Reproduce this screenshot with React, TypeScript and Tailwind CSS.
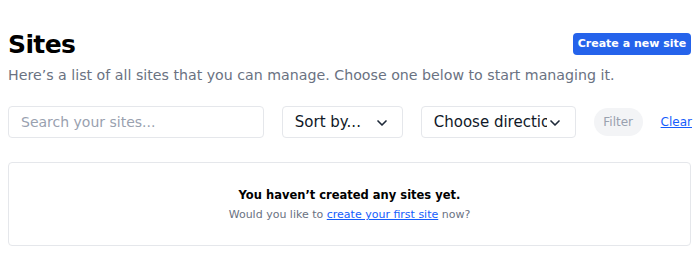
import React from 'react';
import { ChevronDown } from 'lucide-react';

const font = { fontFamily: '"DejaVu Sans", "Noto Sans", sans-serif' };

function SelectBox({ label, width }: { label: string; width: string }) {
  return (
    <div
      className={`${width} relative h-8 flex items-center rounded border border-gray-200 bg-white pl-3 pr-2 text-[15px] text-gray-900`}
    >
      <span className="whitespace-nowrap overflow-hidden">{label}</span>
      <ChevronDown className="absolute right-3 top-2 w-4 h-4 text-gray-800 bg-white" strokeWidth={2.5} />
    </div>
  );
}

export default function App() {
  return (
    <div className="bg-white w-[700px] h-[275px] px-2 pt-[32px]" style={font}>
      <div className="flex items-start justify-between">
        <h1 className="text-[25px] font-bold leading-[26px] text-black tracking-tight">Sites</h1>
        <button className="mr-[1px] mt-[1px] h-[22px] w-[118px] rounded bg-[#2563eb] text-white text-[11px] font-semibold">
          Create a new site
        </button>
      </div>
      <p className="mt-[7px] text-[14.2px] text-gray-500 leading-5">
        Here’s a list of all sites that you can manage. Choose one below to start managing it.
      </p>

      <div className="mt-[21px] flex items-center gap-[18px]">
        <div className="w-[256px] h-8 flex items-center rounded border border-gray-200 px-3 text-[14px] text-gray-400">
          Search your sites...
        </div>
        <SelectBox label="Sort by..." width="w-[121px]" />
        <SelectBox label="Choose direction" width="w-[155px]" />
        <button className="h-7 w-[49px] rounded-full bg-gray-100 text-gray-400 text-[12px]">Filter</button>
        <a href="#" className="text-[12px] text-blue-600 underline">Clear</a>
      </div>

      <div className="mt-6 mr-[1px] h-[84px] rounded border border-gray-200 flex flex-col items-center justify-center pt-[3px]">
        <p className="text-[11.5px] font-semibold text-black">You haven’t created any sites yet.</p>
        <p className="mt-[3px] text-[11px] text-gray-500">
          Would you like to{' '}
          <a href="#" className="text-blue-600 underline">create your first site</a> now?
        </p>
      </div>
    </div>
  );
}
